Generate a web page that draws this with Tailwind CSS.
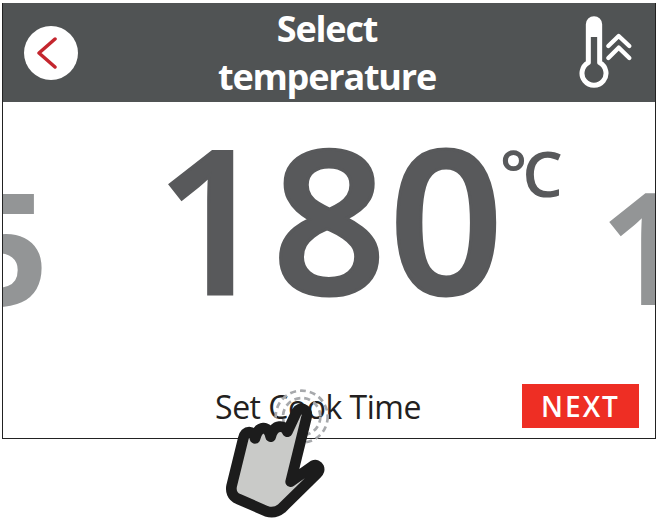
<!DOCTYPE html>
<html lang="en">
<head>
    <meta charset="UTF-8">
    <title>Select temperature</title>
    <script src="https://cdn.jsdelivr.net/npm/@tailwindcss/browser@4"></script>
</head>
<body class="bg-white w-[659px] h-[523px] overflow-hidden relative font-['Open_Sans',sans-serif]">
    <div class="ml-[2px] mt-[3px] w-[654px] h-[436px] border border-[#222] border-t-0 flex flex-col overflow-hidden">
        <header class="h-[99px] shrink-0 bg-[#505354] flex items-center justify-between pl-[21px] pr-[22px]">
            <div class="w-[54px] h-[54px] rounded-full bg-white flex items-center justify-center">
                <svg class="mr-[9px]" width="20" height="32" viewBox="0 0 20 32" fill="none" stroke="#c4262e" stroke-width="3.5" stroke-linecap="round" stroke-linejoin="round">
                    <path d="M18 2 L2 16 L18 30" />
                </svg>
            </div>
            <h1 class="text-white font-bold text-[36px] leading-[48px] tracking-[-1.2px] text-center w-[300px] -ml-[3px]">Select<br>temperature</h1>
            <svg width="54" height="74" viewBox="239 50 162 222" fill="none" stroke="white" stroke-linecap="round" stroke-linejoin="round">
                <path d="M267 190 V75 a17 17 0 0 1 34 0 V190 a36 36 0 1 1 -34 0 Z" stroke-width="15" />
                <path d="M267 75 a17 17 0 0 1 34 0 V113 H267 Z" fill="white" stroke="none" />
                <path d="M327 140 L358 110 L390 140 M327 176 L358 145 L390 176" stroke-width="13" />
            </svg>
        </header>
        <main class="flex-1 flex flex-col min-h-0">
            <div class="h-[273px] flex items-start font-bold overflow-hidden">
                <span class="text-[#939596] text-[157px] leading-none mt-[64px] -ml-[44px] w-[90px] shrink-0">5</span>
                <div class="flex-1 flex items-start justify-center text-[#58595b] pl-[64px]">
                    <span class="text-[200px] font-semibold [-webkit-text-stroke:3px_#58595b] leading-none mt-[15px] tracking-[2.5px]">180</span>
                    <span class="text-[64px] leading-none font-semibold mt-[39px] -ml-[6px] tracking-[-5px]">°C</span>
                </div>
                <span class="text-[#939596] text-[157px] leading-none mt-[64px] -mr-[35px] w-[90px] shrink-0">1</span>
            </div>
            <div class="flex-1 flex items-center relative">
                <p class="w-full text-center text-[#231f20] text-[32px] leading-none tracking-[-0.5px] pr-[22px]">Set Cook Time</p>
                <button class="absolute right-[16px] top-[9px] w-[117px] h-[44px] bg-[#ee2e24] text-white font-semibold text-[28px] leading-none tracking-[2px]">NEXT</button>
            </div>
        </main>
    </div>
    <svg class="absolute left-[200px] top-[375px]" width="150" height="148" viewBox="0 0 450 444" fill="none">
        <circle cx="305" cy="125" r="78" stroke="#a7a9ac" stroke-width="8" stroke-dasharray="18 12" />
        <circle cx="305" cy="125" r="56" stroke="#a7a9ac" stroke-width="8" stroke-dasharray="18 12" />
        <path d="M262 170 L290 110 C297 95 325 100 320 125 L272 320 L340 272 C355 265 365 285 350 297 L245 400 C230 412 215 414 200 409 L115 372 C95 364 92 347 95 332 L130 190 C135 165 160 165 165 190 C175 150 205 150 212 185 C222 145 255 150 262 170 Z" fill="#c9cac8" stroke="#1c1c1c" stroke-width="32" stroke-linejoin="round" />
    </svg>
</body>
</html>
